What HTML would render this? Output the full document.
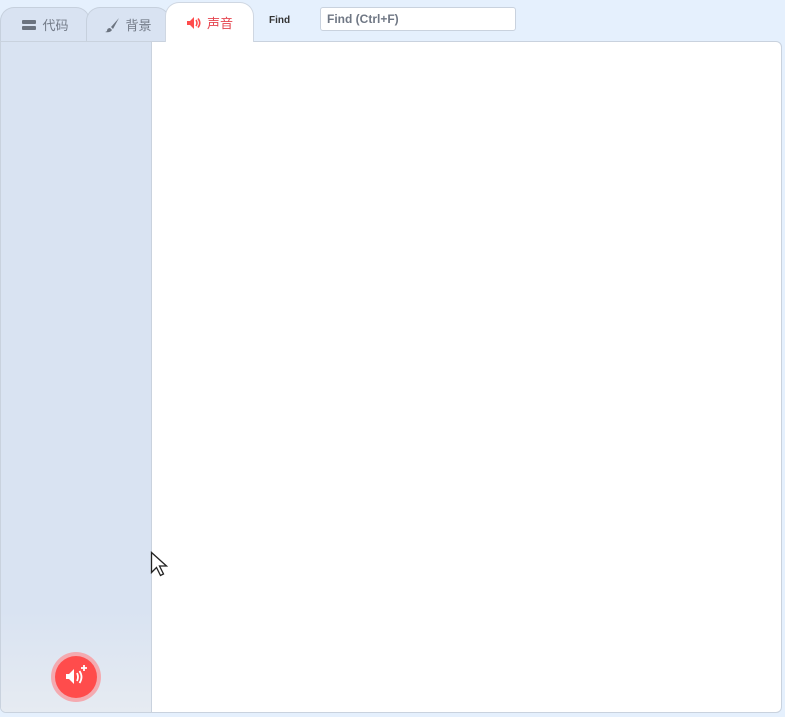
<!DOCTYPE html>
<html><head><meta charset="utf-8"><style>
body{margin:0;width:785px;height:717px;background:#e5f0fd;font-family:"Liberation Sans","Noto Sans CJK SC",sans-serif;position:relative;overflow:hidden}
.tab{position:absolute;top:7px;height:34px;background:#d9e3f2;border:1px solid #c6d0dd;border-bottom:none;border-radius:14px 14px 0 0;box-sizing:border-box;color:#737b88;font-size:13px;display:flex;align-items:center;justify-content:center;gap:5px}
.main{position:absolute;left:0;top:41px;width:782px;height:672px;background:#fff;border:1px solid #c9d2de;border-radius:0 6px 6px 6px;box-sizing:border-box;overflow:hidden}
.side{position:absolute;left:0;top:0;width:150px;height:100%;background:linear-gradient(#d9e3f2 0%,#d9e3f2 85%,#e6ebf2 100%);border-right:1px solid #c9d2de}
</style></head><body>
<div class="tab" style="left:0;width:90px"><svg width="16" height="12" viewBox="0 0 16 12"><rect x="1" y="1" width="14" height="4" rx="1" fill="#6b737f"/><rect x="1" y="7" width="14" height="4" rx="1" fill="#6b737f"/></svg>代码</div>
<div class="tab" style="left:86px;width:84px"><svg width="16" height="16" viewBox="0 0 16 16"><path d="M15 1 L7 10 L9 12 Z" fill="#6b737f"/><path d="M6 11 Q3 11 3 14 Q2 15 1 15 Q6 16 8 13 Z" fill="#6b737f"/></svg>背景</div>
<div class="tab" style="left:165px;top:2px;height:40px;width:89px;background:#fff;color:#e5454f;z-index:2;border-color:#cfd7e2"><svg width="16" height="14" viewBox="0 0 16 14"><path d="M1 5h3l4-4v12l-4-4H1z" fill="#ff4c4c"/><path d="M10 4q2 3 0 6M12 2.5q3.5 4.5 0 9" stroke="#ff4c4c" stroke-width="1.6" fill="none"/></svg>声音</div>
<div style="position:absolute;left:269px;top:15px;font-size:10px;font-weight:bold;color:#333">Find</div>
<div style="position:absolute;left:320px;top:7px;width:196px;height:24px;background:#fff;border:1px solid #c9d2de;border-radius:3px;box-sizing:border-box;font-size:12px;color:#6f7784;padding:4px 6px;font-weight:bold">Find (Ctrl+F)</div>
<div class="main"><div class="side"></div>
<div style="position:absolute;left:50px;top:610px;width:50px;height:50px;border-radius:50%;background:#f4aab0"></div>
<div style="position:absolute;left:54px;top:614px;width:42px;height:42px;border-radius:50%;background:#ff4c4c"></div>
<svg style="position:absolute;left:63px;top:622px" width="26" height="26" viewBox="0 0 26 26"><path d="M2 10h3l5-5v15l-5-5H2z" fill="#fff"/><path d="M13 9q2 4 0 8M15.5 7q4 6 0 12" stroke="#fff" stroke-width="1.8" fill="none"/><path d="M20 1v6M17 4h6" stroke="#fff" stroke-width="1.8"/></svg>
</div>
<svg style="position:absolute;left:150px;top:551px" width="20" height="28" viewBox="0 0 20 28"><path d="M1.5 1.5v20l5-5 4 8 3-1.5-4-8h7z" fill="#fff" stroke="#222" stroke-width="1.3"/></svg>
</body></html>
